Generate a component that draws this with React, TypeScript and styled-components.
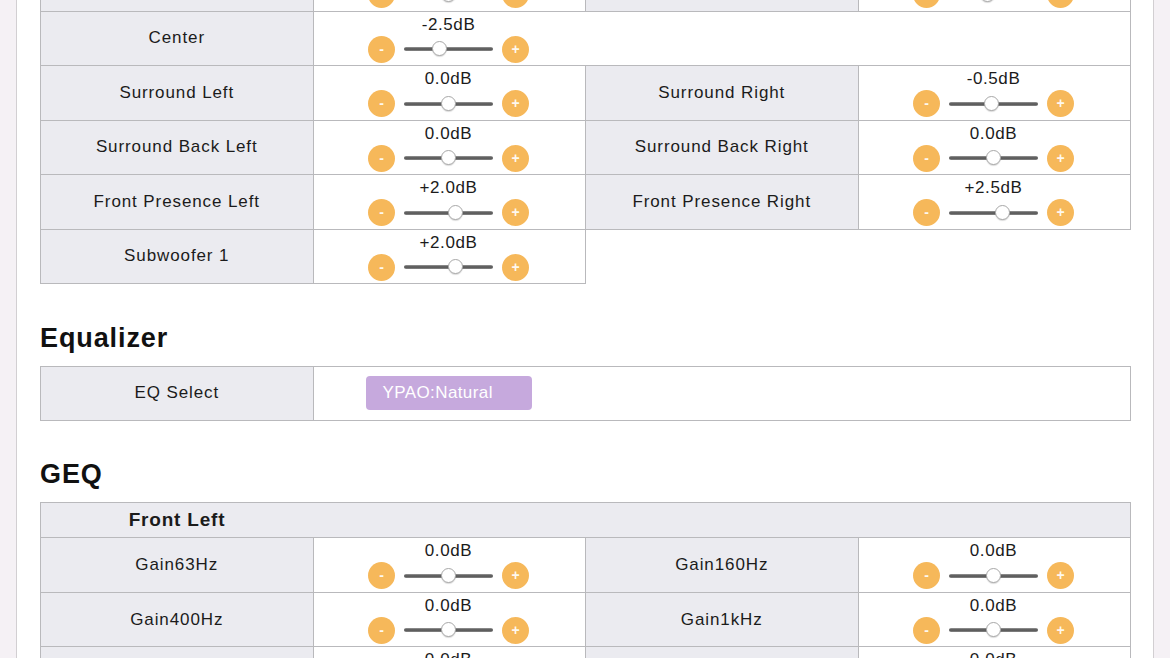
import React from 'react';
import styled, {createGlobalStyle} from 'styled-components';

const GlobalStyle = createGlobalStyle`
  html, body {
    margin: 0;
    padding: 0;
    background: #f5f1f5;
    font-family: "Liberation Sans", Arial, sans-serif;
    color: #1b1b1b;
    overflow: hidden;
  }
`;

const Page = styled.div`
  padding: 0 16px;
  min-height: 100vh;
`;

const Panel = styled.div`
  background: #fff;
  border-left: 1px solid #d2cfd2;
  border-right: 1px solid #d2cfd2;
  padding: 0 22px 40px 23px;
  margin-top: -44px;
`;

const Heading = styled.h2`
  margin: 38.7px 0 13px;
  font-size: 27px;
  line-height: 30px;
  font-weight: bold;
  letter-spacing: 0.9px;
  color: #111;
`;

const Table = styled.table`
  width: 100%;
  border-collapse: collapse;
  table-layout: fixed;
`;

const LabelCell = styled.td`
  background: #ebebf0;
  border: 1px solid #b9b9bc;
  text-align: center;
  vertical-align: middle;
  font-size: 17px;
  letter-spacing: 0.9px;
  padding: 0;
`;

const ValueCell = styled.td`
  background: #fff;
  border: 1px solid #b9b9bc;
  padding: 3px 0 2.5px;
  vertical-align: middle;
`;

const HeaderCell = styled.td`
  background: #ebebf0;
  border: 1px solid #b9b9bc;
  height: 34px;
  padding: 0;
`;

const HeaderText = styled.span`
  display: block;
  width: 272px;
  text-align: center;
  font-size: 19px;
  font-weight: bold;
  letter-spacing: 0.8px;
`;

const Control = styled.div`
  width: 272px;
  display: flex;
  flex-direction: column;
  align-items: center;
`;

const Value = styled.div`
  font-size: 17px;
  line-height: 20px;
  letter-spacing: 0.6px;
  margin: 0 2px 1px 0;
`;

const Buttons = styled.div`
  display: flex;
  align-items: center;
  gap: 9px;
  height: 27px;
  margin-right: 2px;
`;

const RoundButton = styled.button`
  width: 27px;
  height: 27px;
  border-radius: 50%;
  border: none;
  padding: 0;
  background: #f6b85a;
  color: rgba(255, 255, 255, 0.92);
  font-family: "Liberation Sans", Arial, sans-serif;
  font-size: 14px;
  font-weight: bold;
  line-height: 27px;
  text-align: center;
  cursor: pointer;
`;

const Track = styled.div`
  position: relative;
  width: 89px;
  height: 4px;
  border-radius: 2px;
  background: linear-gradient(#9a9a9a, #4f4f4f 50%, #8a8a8a);
`;

const Thumb = styled.div`
  position: absolute;
  top: 50%;
  width: 15px;
  height: 15px;
  margin-top: -8px;
  border-radius: 50%;
  background: #fff;
  border: 1px solid #a8a8a8;
  box-sizing: border-box;
  box-shadow: 0 1px 1px rgba(0, 0, 0, 0.15);
`;

const SelectCell = styled.td`
  background: #fff;
  border: 1px solid #b9b9bc;
  height: 53px;
  padding: 0;
  vertical-align: middle;
`;

const SelectButton = styled.button`
  width: 166px;
  height: 34px;
  margin-left: 52px;
  border: none;
  border-radius: 4px;
  background: #c6a9dd;
  color: #fff;
  font-family: "Liberation Sans", Arial, sans-serif;
  font-size: 17px;
  letter-spacing: 0.4px;
  text-align: left;
  padding: 0 0 0 17px;
  cursor: pointer;
`;

type Ch = {name: string; db: number};

const fmt = (db: number) => (db > 0 ? '+' : '') + db.toFixed(1) + 'dB';

const Level = ({db}: {db: number}) => {
  // range is -10..+10 dB, thumb travels 74px
  const pos = ((db + 10) / 20) * 74;
  return (
    <Control>
      <Value>{fmt(db)}</Value>
      <Buttons>
        <RoundButton>-</RoundButton>
        <Track>
          <Thumb style={{left: pos}} />
        </Track>
        <RoundButton>+</RoundButton>
      </Buttons>
    </Control>
  );
};

const Row = ({left, right, wide}: {left: Ch; right?: Ch; wide?: boolean}) => (
  <tr>
    <LabelCell>{left.name}</LabelCell>
    <ValueCell colSpan={wide ? 3 : 1}>
      <Level db={left.db} />
    </ValueCell>
    {right && (
      <>
        <LabelCell>{right.name}</LabelCell>
        <ValueCell>
          <Level db={right.db} />
        </ValueCell>
      </>
    )}
  </tr>
);

const Cols = () => (
  <colgroup>
    <col />
    <col />
    <col />
    <col />
  </colgroup>
);

const levels: [Ch, Ch | undefined][] = [
  [{name: 'Front Left', db: 0}, {name: 'Front Right', db: -1.5}],
  [{name: 'Center', db: -2.5}, undefined],
  [{name: 'Surround Left', db: 0}, {name: 'Surround Right', db: -0.5}],
  [{name: 'Surround Back Left', db: 0}, {name: 'Surround Back Right', db: 0}],
  [{name: 'Front Presence Left', db: 2}, {name: 'Front Presence Right', db: 2.5}],
  [{name: 'Subwoofer 1', db: 2}, undefined],
];

const geq: [Ch, Ch | undefined][] = [
  [{name: 'Gain63Hz', db: 0}, {name: 'Gain160Hz', db: 0}],
  [{name: 'Gain400Hz', db: 0}, {name: 'Gain1kHz', db: 0}],
  [{name: 'Gain2.5kHz', db: 0}, {name: 'Gain6.3kHz', db: 0}],
  [{name: 'Gain16kHz', db: 0}, undefined],
];

const App = () => (
  <Page>
    <GlobalStyle />
    <Panel>
      <Table>
        <Cols />
        <tbody>
          {levels.map(([l, r]) => (
            <Row key={l.name} left={l} right={r} wide={!r && l.name === 'Center'} />
          ))}
        </tbody>
      </Table>

      <Heading>Equalizer</Heading>
      <Table>
        <Cols />
        <tbody>
          <tr>
            <LabelCell>EQ Select</LabelCell>
            <SelectCell colSpan={3}>
              <SelectButton>YPAO:Natural</SelectButton>
            </SelectCell>
          </tr>
        </tbody>
      </Table>

      <Heading>GEQ</Heading>
      <Table>
        <Cols />
        <tbody>
          <tr>
            <HeaderCell colSpan={4}>
              <HeaderText>Front Left</HeaderText>
            </HeaderCell>
          </tr>
          {geq.map(([l, r]) => (
            <Row key={l.name} left={l} right={r} />
          ))}
        </tbody>
      </Table>
    </Panel>
  </Page>
);

export default App;
